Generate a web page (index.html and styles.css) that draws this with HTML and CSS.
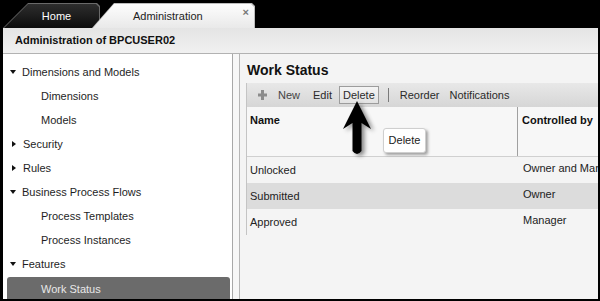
FILE: index.html
```html
<!DOCTYPE html>
<html>
<head>
<meta charset="utf-8">
<link rel="stylesheet" href="styles.css">
</head>
<body>
<div class="app">
  <div class="tabbar">
    <div class="tab-home"><div class="tab-home-in">Home</div></div>
    <div class="tab-admin"><div class="tab-admin-in"><span class="tab-label">Administration</span><span class="tab-close">×</span></div></div>
  </div>
  <div class="header">Administration of BPCUSER02</div>
  <div class="main">
    <div class="tree">
      <div class="node"><span class="tri-down"></span>Dimensions and Models</div>
      <div class="leaf">Dimensions</div>
      <div class="leaf">Models</div>
      <div class="node"><span class="tri-right"></span>Security</div>
      <div class="node"><span class="tri-right"></span>Rules</div>
      <div class="node"><span class="tri-down"></span>Business Process Flows</div>
      <div class="leaf">Process Templates</div>
      <div class="leaf">Process Instances</div>
      <div class="node"><span class="tri-down"></span>Features</div>
      <div class="leaf selected">Work Status</div>
    </div>
    <div class="splitter"></div>
    <div class="content">
      <div class="title">Work Status</div>
      <div class="panel">
        <div class="toolbar">
          <svg class="plus" width="9" height="10" viewBox="0 0 9 10"><rect x="3" y="0" width="3" height="10" fill="#8c8c8c"/><rect x="0" y="3.5" width="9" height="3" fill="#8c8c8c"/></svg>
          <span class="tb tb-new">New</span>
          <span class="tb tb-edit">Edit</span>
          <span class="tb tb-delete">Delete</span>
          <span class="tb-sep"></span>
          <span class="tb tb-reorder">Reorder</span>
          <span class="tb tb-notif">Notifications</span>
        </div>
        <div class="thead">
          <div class="th th-name">Name</div>
          <div class="th th-ctrl">Controlled by</div>
        </div>
        <div class="row"><div class="td-name">Unlocked</div><div class="td-ctrl">Owner and Manager</div></div>
        <div class="row alt"><div class="td-name">Submitted</div><div class="td-ctrl">Owner</div></div>
        <div class="row"><div class="td-name">Approved</div><div class="td-ctrl">Manager</div></div>
      </div>
      <svg class="arrow" width="40" height="64" viewBox="0 0 40 64"><path d="M17 3 L31 31 L21.5 25 L21.5 53 Q17 59 12.5 53 L12.5 25 L3 31 Z" fill="#000"/></svg>
      <div class="tooltip">Delete</div>
    </div>
  </div>
</div>
</body>
</html>
```
FILE: styles.css
```css
* { box-sizing: border-box; }
html, body { margin: 0; padding: 0; }
body {
  width: 600px;
  height: 301px;
  overflow: hidden;
  background: #000;
  font-family: "Liberation Sans", Arial, sans-serif;
  font-size: 11px;
  color: #1e1e1e;
}
.app {
  width: 600px;
  height: 301px;
  padding: 0 2px 2px 3px;
  display: flex;
  flex-direction: column;
}
.tabbar {
  height: 28px;
  flex: none;
  display: flex;
  align-items: flex-end;
}
.tab-home {
  width: 97px;
  height: 25px;
  background: #6a6a6a;
  clip-path: polygon(25px 0, calc(100% - 3px) 0, 100% 3px, 100% 100%, 0 100%);
  padding: 1px 1px 0 1px;
}
.tab-home-in {
  height: 24px;
  background: linear-gradient(#2e2e2e, #0c0c0c);
  clip-path: polygon(24px 0, calc(100% - 3px) 0, 100% 3px, 100% 100%, 0 100%);
  color: #fff;
  text-align: center;
  line-height: 24px;
  padding-left: 10px;
}
.tab-admin {
  width: 163px;
  height: 25px;
  margin-left: -8px;
  background: #bcbcbc;
  clip-path: polygon(22px 0, calc(100% - 3px) 0, 100% 3px, 100% 100%, 0 100%);
  padding: 1px 1px 0 1px;
}
.tab-admin-in {
  height: 24px;
  background: linear-gradient(#fdfdfd, #e9e9e9);
  clip-path: polygon(21px 0, calc(100% - 3px) 0, 100% 3px, 100% 100%, 0 100%);
  display: flex;
}
.tab-label {
  flex: 1;
  text-align: center;
  line-height: 25px;
  color: #222;
}
.tab-close {
  font-size: 11px;
  font-weight: bold;
  color: #777;
  line-height: 10px;
  margin: 3px 5px 0 0;
}
.header {
  height: 26px;
  flex: none;
  background: linear-gradient(#e4e4e4, #f1f1f1);
  border-bottom: 1px solid #b2b2b2;
  font-weight: bold;
  line-height: 25px;
  padding-left: 12px;
  color: #111;
}
.main {
  flex: 1;
  display: flex;
  min-height: 0;
  overflow: hidden;
}
.tree {
  width: 229px;
  flex: none;
  background: #fff;
  padding-top: 6px;
  overflow: hidden;
}
.node, .leaf {
  height: 24px;
  line-height: 24px;
  white-space: nowrap;
}
.node {
  display: flex;
  align-items: center;
  padding-left: 7px;
}
.leaf { padding-left: 38px; }
.tri-down {
  width: 0; height: 0;
  border-left: 3.5px solid transparent;
  border-right: 3.5px solid transparent;
  border-top: 4.5px solid #111;
  margin-right: 6px;
}
.tri-right {
  width: 0; height: 0;
  border-top: 3.5px solid transparent;
  border-bottom: 3.5px solid transparent;
  border-left: 4.5px solid #111;
  margin-left: 2px;
  margin-right: 7px;
}
.leaf.selected {
  margin: 1px 2px 0 4px;
  padding-left: 34px;
  background: #6b6b6b;
  color: #e8e8e8;
  border-radius: 3px 3px 0 0;
}
.splitter {
  width: 8px;
  flex: none;
  background: #f7f7f7;
  border-left: 1px solid #a8a8a8;
  border-right: 1px solid #b6b6b6;
}
.content {
  flex: 1;
  position: relative;
  background: #f4f4f4;
  padding-left: 5px;
  overflow: hidden;
}
.title {
  height: 29px;
  padding: 8px 0 0 2px;
  line-height: 16px;
  font-size: 14px;
  font-weight: bold;
  color: #111;
}
.panel {
  border-left: 1px solid #c4c4c4;
  margin-left: 1px;
}
.toolbar {
  height: 24px;
  display: flex;
  align-items: center;
  background: linear-gradient(#e8e8e8, #d6d6d6);
  color: #2a2a2a;
}
.plus { margin-left: 11px; flex: none; }
.tb { line-height: 16px; white-space: nowrap; }
.tb-new { margin-left: 11px; color: #444; }
.tb-edit { margin-left: 13px; }
.tb-delete {
  margin-left: 7px;
  height: 18px;
  line-height: 16px;
  padding: 0 3px;
  border: 1px solid #9c9c9c;
  background: linear-gradient(#f4f4f4, #e2e2e2);
}
.tb-sep {
  width: 1px;
  height: 14px;
  background: #7a7a7a;
  margin-left: 9px;
}
.tb-reorder { margin-left: 11px; }
.tb-notif { margin-left: 10px; }
.thead {
  height: 50px;
  display: flex;
  background: #f7f7f7;
  border-bottom: 1px solid #d0d0d0;
}
.th {
  font-weight: bold;
  padding-top: 6px;
  line-height: 14px;
  color: #111;
  white-space: nowrap;
}
.th-name {
  width: 271px;
  flex: none;
  padding-left: 3px;
  border-right: 1px solid #a0a0a0;
}
.th-ctrl { padding-left: 4px; }
.row {
  height: 26px;
  display: flex;
  white-space: nowrap;
  overflow: hidden;
  color: #222;
}
.row.alt { background: #dcdcdc; }
.td-name {
  width: 271px;
  flex: none;
  padding-left: 3px;
  line-height: 26px;
}
.td-ctrl {
  flex: none;
  padding-left: 5px;
  line-height: 22px;
}
.arrow {
  position: absolute;
  left: 100px;
  top: 44px;
  filter: drop-shadow(3px 2px 2px rgba(0,0,0,0.45));
}
.tooltip {
  position: absolute;
  left: 143px;
  top: 74px;
  width: 43px;
  height: 25px;
  background: #fff;
  border: 1px solid #cfcfcf;
  border-radius: 3px;
  box-shadow: 2px 2px 3px rgba(0,0,0,0.35);
  text-align: center;
  line-height: 23px;
  color: #222;
}
```
